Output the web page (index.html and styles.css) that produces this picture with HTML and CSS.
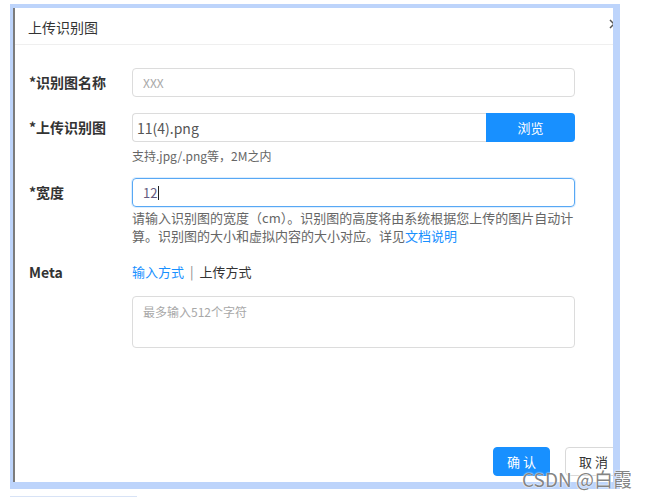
FILE: index.html
```html
<!DOCTYPE html>
<html lang="zh">
<head>
<meta charset="utf-8">
<title>上传识别图</title>
<link rel="stylesheet" href="styles.css">
</head>
<body>
<div class="frame">
  <div class="dialog">
    <div class="header">
      <span class="title">上传识别图</span>
      <svg class="close" width="10" height="10" viewBox="0 0 10 10"><path d="M1 1 L9 9 M9 1 L1 9" stroke="#555" stroke-width="1.5" fill="none"/></svg>
    </div>
    <div class="form">
      <div class="field f1">
        <div class="label">*识别图名称</div>
        <div class="control">
          <div class="input"><span class="placeholder">XXX</span></div>
        </div>
      </div>
      <div class="field f2">
        <div class="label">*上传识别图</div>
        <div class="control">
          <div class="upload">
            <div class="input file"><span class="value">11(4).png</span></div>
            <div class="browse">浏览</div>
          </div>
          <div class="help">支持.jpg/.png等，2M之内</div>
        </div>
      </div>
      <div class="field f3">
        <div class="label">*宽度</div>
        <div class="control">
          <div class="input focused"><span class="num">12</span><span class="caret"></span></div>
          <div class="help long">请输入识别图的宽度（cm）。识别图的高度将由系统根据您上传的图片自动计<br>算。识别图的大小和虚拟内容的大小对应。详见<a class="link">文档说明</a></div>
        </div>
      </div>
      <div class="field f4">
        <div class="label meta">Meta</div>
        <div class="control">
          <div class="tabs"><span class="tab active">输入方式</span><span class="sep">|</span><span class="tab">上传方式</span></div>
        </div>
      </div>
      <div class="field f5">
        <div class="label"></div>
        <div class="control">
          <div class="textarea"><span class="placeholder ta">最多输入512个字符</span></div>
        </div>
      </div>
    </div>
    <div class="footer">
      <div class="btn primary">确 认</div>
      <div class="btn">取 消</div>
    </div>
  </div>
</div>
<div class="below"></div>
<div class="watermark">CSDN @白霞</div>
</body>
</html>
```
FILE: styles.css
```css
* { box-sizing: border-box; }
html, body { margin: 0; padding: 0; background: #fff; }
body {
  font-family: "Noto Sans CJK SC", "Noto Sans", sans-serif;
  color: #333;
  width: 648px;
  height: 498px;
  overflow: hidden;
  position: relative;
}
.frame {
  margin: 4px 0 0 10px;
  width: 610px;
  height: 485px;
  background: #bdd4fb;
  padding: 4px 7px 7px 3px;
}
.dialog {
  width: 100%;
  height: 100%;
  background: #fff;
  border-left: 2px solid #7c7c7c;
  overflow: hidden;
  display: flex;
  flex-direction: column;
}
.header {
  position: relative;
  height: 37px;
  border-bottom: 1px solid #efefef;
  padding: 6px 0 0 13px;
  flex: none;
}
.title {
  font-size: 14px;
  line-height: 20px;
  color: #333;
}
.close {
  position: absolute;
  right: -6px;
  top: 11px;
}
.form {
  padding: 23px 0 0 14px;
}
.field {
  display: flex;
  align-items: flex-start;
}
.label {
  width: 103px;
  flex: none;
  font-size: 14px;
  font-weight: bold;
  line-height: 29px;
  height: 29px;
  color: #333;
}
.control {
  width: 443px;
  flex: none;
}
.f2 { margin-top: 16px; }
.f3 { margin-top: 13px; }
.f4 { margin-top: 17px; }
.f5 { margin-top: 14px; }
.input {
  height: 29px;
  border: 1px solid #dcdcdc;
  border-radius: 4px;
  padding: 0 10px;
  display: flex;
  align-items: center;
  font-size: 13px;
}
.placeholder { color: #a8a8a8; font-size: 12px; }
.upload { display: flex; }
.input.file {
  flex: 1;
  border-radius: 4px 0 0 4px;
  border-right: none;
  padding-left: 4px;
}
.value { color: #555; font-size: 14px; }
.browse {
  width: 89px;
  height: 29px;
  background: #1890ff;
  color: #fff;
  font-size: 13px;
  line-height: 29px;
  text-align: center;
  border-radius: 0 4px 4px 0;
  flex: none;
}
.help {
  font-size: 12px;
  line-height: 18px;
  color: #666;
  margin-top: 5px;
}
.help.long {
  font-size: 13px;
  line-height: 18px;
  margin-top: 2px;
  width: 460px;
  white-space: nowrap;
}
.link { color: #1890ff; }
.input.focused {
  border-color: #58a8f4;
  box-shadow: 0 0 0 1px rgba(24, 144, 255, 0.15);
}
.num { color: #655a7e; font-size: 13px; }
.caret {
  display: inline-block;
  width: 1px;
  height: 14px;
  background: #222;
  margin-left: 1px;
}
.tabs {
  font-size: 13px;
  line-height: 20px;
  height: 20px;
}
.label.meta { height: 20px; line-height: 20px; }
.tab { color: #333; }
.tab.active { color: #1890ff; }
.sep { color: #888; margin: 0 6px; }
.textarea {
  height: 52px;
  border: 1px solid #dcdcdc;
  border-radius: 4px;
  padding: 4px 10px;
  line-height: 18px;
}
.footer {
  margin-top: auto;
  padding: 0 0 6px 478px;
  display: flex;
  gap: 15px;
  flex: none;
}
.btn {
  width: 57px;
  height: 29px;
  flex: none;
  border: 1px solid #d9d9d9;
  border-radius: 4px;
  font-size: 13px;
  line-height: 27px;
  text-align: center;
  color: #333;
  background: #fff;
}
.btn.primary {
  background: #1890ff;
  border-color: #1890ff;
  color: #fff;
}
.below {
  margin: 7px 0 0 10px;
  width: 127px;
  height: 1px;
  background: #d8e3f6;
}
.watermark {
  position: absolute;
  left: 522px;
  top: 467px;
  font-size: 19px;
  line-height: 24px;
  color: rgba(110, 110, 110, 0.85);
  text-shadow: 0 0 1px #fff, 0 0 2px #fff;
  white-space: nowrap;
}
```
